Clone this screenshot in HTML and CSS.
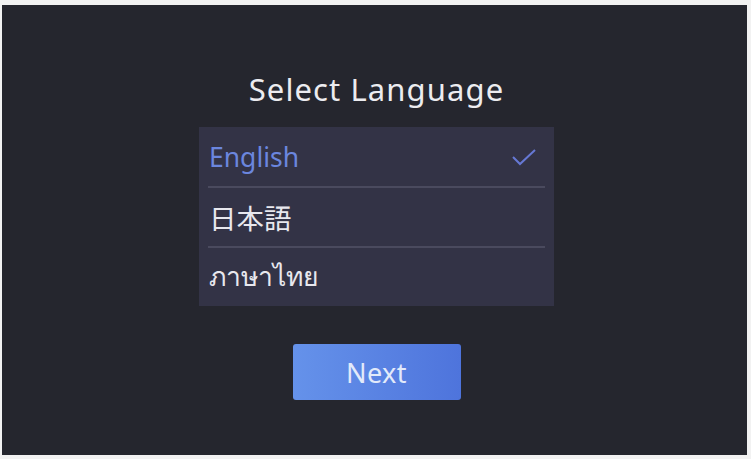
FILE: index.html
```html
<!DOCTYPE html>
<html lang="en">
<head>
<meta charset="utf-8">
<link rel="stylesheet" href="styles.css">
</head>
<body>
<div class="frame">
  <div class="screen">
    <h1 class="title">Select Language</h1>
    <ul class="list">
      <li class="item selected"><span>English</span>
        <svg class="check" width="26" height="18" viewBox="0 0 26 18"><path d="M2 9 L9 16 L24 2" fill="none" stroke="#6678d4" stroke-width="2"/></svg>
      </li>
      <li class="item"><span class="ja" lang="ja">日本語</span></li>
      <li class="item"><span lang="th">ภาษาไทย</span></li>
    </ul>
    <button class="next">Next</button>
  </div>
</div>
</body>
</html>
```
FILE: styles.css
```css
html, body { margin: 0; padding: 0; background: #f2f2f2; }
body { width: 751px; height: 459px; overflow: hidden; }
.frame { padding: 5px 4px 4px 2px; height: 459px; box-sizing: border-box; }
.screen {
  background: #25262e;
  height: 450px;
  padding-left: 4px;
  box-sizing: border-box;
  display: flex;
  flex-direction: column;
  align-items: center;
  font-family: "Noto Sans", "Noto Sans CJK JP", sans-serif;
}
.title {
  margin: 62px 0 0 0;
  font-size: 31px;
  font-weight: 400;
  color: #ececf0;
  line-height: 44px;
  letter-spacing: 1.1px;
}
.list {
  list-style: none;
  margin: 16px 0 0 0;
  padding: 0 9px;
  width: 355px;
  box-sizing: border-box;
  background: #333346;
}
.item {
  height: 60px;
  display: flex;
  align-items: center;
  justify-content: space-between;
  padding: 0 8px 0 1px;
  border-top: 2px solid #4a4a5e;
  color: #e8e8ee;
  font-size: 26.5px;
  box-sizing: border-box;
}
.item:first-child { border-top: none; height: 59px; }
.item .ja { font-size: 27.5px; }
.item.selected { color: #6b86de; }
.check { display: block; }
.next {
  margin-top: 38px;
  width: 168px;
  height: 56px;
  border: none;
  border-radius: 3px;
  background: linear-gradient(90deg, #6592ea, #4e74dc);
  color: #e2eafa;
  font-family: "Noto Sans", sans-serif;
  font-size: 27px;
  letter-spacing: 0.5px;
  padding: 0;
}
```
